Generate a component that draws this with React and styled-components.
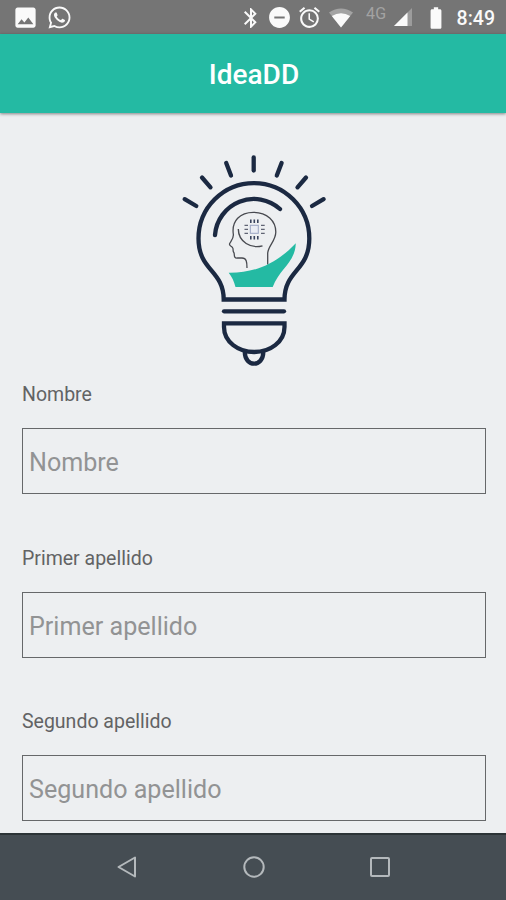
import React from 'react'
import styled, { createGlobalStyle, ThemeProvider } from 'styled-components'
import { FaWhatsapp } from 'react-icons/fa'
import { MdImage, MdBluetooth, MdDoNotDisturbOn, MdAlarm, MdBatteryFull } from 'react-icons/md'

const theme = {
  colors: {
    status: '#757575',
    primary: '#24baa3',
    background: '#edeff1',
    navy: '#1b2942',
    label: '#626364',
    placeholder: '#929394',
    border: '#66686a',
    navigation: '#454d53'
  }
}

const GlobalStyle = createGlobalStyle`
  * {
    box-sizing: border-box;
  }
  body {
    margin: 0;
    overflow: hidden;
  }
`
const Screen = styled.div`
  display: flex;
  flex-direction: column;
  width: 506px;
  height: 900px;
  font-family: Roboto, sans-serif;
  background-color: ${props => props.theme.colors.background};
`
const StatusBar = styled.div`
  display: flex;
  justify-content: space-between;
  flex: 0 0 34px;
  height: 34px;
  padding: 0 11px 0 12px;
  color: #fafafa;
  background-color: ${props => props.theme.colors.status};
`
const StatusGroup = styled.div`
  display: flex;
  align-items: center;
  height: 35px;
`
const StatusIcon = styled.span`
  display: flex;
  margin-left: ${props => props.$gap || 0}px;
`
const NetworkType = styled.span`
  margin: -8px 0 0 13px;
  font-size: 16px;
  line-height: 18px;
  letter-spacing: 0.4px;
  color: #a3a3a3;
`
const Clock = styled.span`
  margin: 2px 0 0 8px;
  font-size: 19.5px;
  font-weight: 500;
  line-height: 24px;
`
const Header = styled.header`
  display: flex;
  align-items: center;
  justify-content: center;
  flex: 0 0 79px;
  z-index: 1;
  background-color: ${props => props.theme.colors.primary};
  box-shadow: 0 1px 3px rgba(0, 0, 0, 0.45);
`
const Title = styled.h1`
  margin: 3px 0 0 2px;
  color: white;
  font-size: 28px;
  font-weight: 500;
  line-height: 32px;
`
const Content = styled.main`
  flex: 1 1 auto;
  min-height: 0;
  padding: 32px 20px 0 22px;
  overflow: hidden;
`
const Logo = styled.svg`
  display: block;
  width: 170px;
  height: 230px;
  margin: 0 0 8px 148px;
`
const Field = styled.div`
  height: 163.5px;
`
const Label = styled.label`
  display: block;
  margin-bottom: 21px;
  color: ${props => props.theme.colors.label};
  font-size: 19.5px;
  line-height: 24px;
`
const Input = styled.input`
  display: block;
  width: 464px;
  height: 66px;
  padding: 3px 6px 0;
  border: 1.5px solid ${props => props.theme.colors.border};
  border-radius: 0;
  outline: none;
  background: transparent;
  font-family: inherit;
  font-size: 25.1px;
  &::placeholder {
    color: ${props => props.theme.colors.placeholder};
    opacity: 1;
  }
`
const NavigationBar = styled.nav`
  display: flex;
  align-items: center;
  justify-content: space-between;
  flex: 0 0 67px;
  padding: 0 113px 1px 114px;
  border-top: 2px solid #2c3437;
  background-color: ${props => props.theme.colors.navigation};
`
const NavIcon = styled.svg`
  width: 26px;
  height: 26px;
  fill: none;
  stroke: #b4b9bc;
  stroke-width: 2;
  stroke-linejoin: round;
`

const rays = [
  'M184.7 199.2L196.3 206',
  'M202 177.5L210.5 187.3',
  'M226.2 163L231 175.5',
  'M253.7 157.5V170.5',
  'M281.6 163L276.8 175.5',
  'M306 177.5L297.5 187.3',
  'M323.6 199.2L312 206'
]

const BulbLogo = () => (
  <Logo viewBox='170 145 170 230' fill='none' stroke={theme.colors.navy} strokeWidth='4.3'>
    {rays.map(d => <path key={d} d={d} strokeLinecap='round' />)}
    <path d='M223.7 299.5C223.7 270 198.5 271 198.5 238.5A55.4 55.4 0 0 1 309.3 238.5C309.3 271 284.5 270 284.5 299.5Z' />
    <path d='M215 235A39 39 0 0 1 280 209' strokeLinecap='round' />
    <path d='M224 311.3H284' strokeLinecap='round' />
    <path d='M224 323.3H284.5V327C284.5 342 270 352 254.2 352S224 342 224 327Z' />
    <path d='M244.8 352C244.8 367.5 263.3 367.5 263.3 352' />
    <path
      d='M247 268C247 262 246.5 258 242 258H237.5C233 258.5 235 254 233.8 252.5C232.5 251 233.5 249.5 232.8 248C232 246 228.5 246 229.7 243.5C231 241 234 238 233.3 234C231.5 221 240 212.3 253.5 212.3C267 212.3 275.8 221 275.8 232C275.8 241 268.5 245 267.7 253V264.5'
      stroke='#484a50'
      strokeWidth='1.3'
    />
    <path d='M238.3 229C238.5 242 251 249 262.5 245.8' stroke='#484a50' strokeWidth='1.4' />
    <rect x='250.3' y='225.3' width='8' height='8' fill='#e9ecf3' stroke='#9ba6c2' strokeWidth='1' />
    <path
      d='M250.8 219.5V223M254.3 219.5V223M257.8 219.5V223M250.8 236V239.5M254.3 236V239.5M257.8 236V239.5'
      stroke='#39435d'
      strokeWidth='1.6'
    />
    <path
      d='M244.5 225.4H248M244.5 229.4H248M244.5 233.4H248M261 225.4H264.7M261 229.4H264.7M261 233.4H264.7'
      stroke='#606474'
      strokeWidth='1.3'
    />
    <path
      d='M228.7 272.7C255 273 276 264 295.8 243.2C295 263 280 268 272.7 287H235.5C234 281 232 277 228.7 272.7Z'
      fill={theme.colors.primary}
      stroke='none'
    />
  </Logo>
)

const WifiIcon = () => (
  <svg width='24' height='20' viewBox='0 0 24 20' fill='currentColor'>
    <path d='M0 4.5Q12 -3.5 24 4.5L12 19.5Z' opacity='0.35' />
    <path d='M2.8 8Q12 2.5 21.2 8L12 19.5Z' />
  </svg>
)

const SignalIcon = () => (
  <svg width='19' height='19' viewBox='0 0 19 19' fill='currentColor'>
    <path d='M18 0V18H0Z' opacity='0.3' />
    <path d='M13.5 4.5V18H0Z' />
  </svg>
)

const FormField = ({ name }) => (
  <Field>
    <Label htmlFor={name}>{name}</Label>
    <Input id={name} placeholder={name} />
  </Field>
)

const App = () => (
  <ThemeProvider theme={theme}>
    <GlobalStyle />
    <Screen>
      <StatusBar>
        <StatusGroup>
          <StatusIcon><MdImage size={27} /></StatusIcon>
          <StatusIcon $gap={8}><FaWhatsapp size={25} /></StatusIcon>
        </StatusGroup>
        <StatusGroup>
          <StatusIcon><MdBluetooth size={24} /></StatusIcon>
          <StatusIcon $gap={4}><MdDoNotDisturbOn size={25} /></StatusIcon>
          <StatusIcon $gap={5}><MdAlarm size={25} /></StatusIcon>
          <StatusIcon $gap={7}><WifiIcon /></StatusIcon>
          <NetworkType>4G</NetworkType>
          <StatusIcon $gap={7}><SignalIcon /></StatusIcon>
          <StatusIcon $gap={10}><MdBatteryFull size={26} /></StatusIcon>
          <Clock>8:49</Clock>
        </StatusGroup>
      </StatusBar>
      <Header>
        <Title>IdeaDD</Title>
      </Header>
      <Content>
        <BulbLogo />
        <FormField name='Nombre' />
        <FormField name='Primer apellido' />
        <FormField name='Segundo apellido' />
      </Content>
      <NavigationBar>
        <NavIcon viewBox='0 0 26 26'><path d='M21 3.5V22.5L4.5 13Z' /></NavIcon>
        <NavIcon viewBox='0 0 26 26'><circle cx='13' cy='13' r='9.7' /></NavIcon>
        <NavIcon viewBox='0 0 26 26'><rect x='4' y='4' width='18' height='18' rx='1' /></NavIcon>
      </NavigationBar>
    </Screen>
  </ThemeProvider>
)

export default App
